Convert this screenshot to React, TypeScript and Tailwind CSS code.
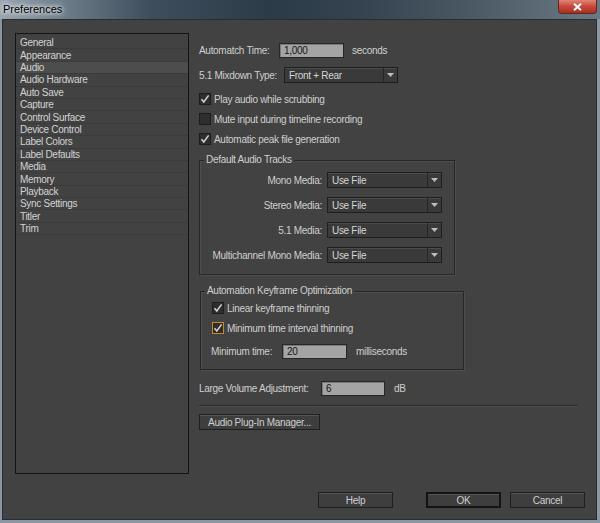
import React from 'react';

const items = [
  'General', 'Appearance', 'Audio', 'Audio Hardware', 'Auto Save', 'Capture', 'Control Surface',
  'Device Control', 'Label Colors', 'Label Defaults', 'Media', 'Memory', 'Playback',
  'Sync Settings', 'Titler', 'Trim',
];

function Check({ checked, focus }: { checked?: boolean; focus?: boolean }) {
  return (
    <span
      className={`flex h-[12px] w-[12px] shrink-0 items-center justify-center border bg-[#2e2e2e] ${
        focus ? 'border-[#c38a2b]' : 'border-[#1d1d1d]'
      }`}
    >
      {checked && (
        <svg viewBox="0 0 10 10" className="h-[10px] w-[10px]">
          <path d="M1.5 5.2 L3.8 8 L8.6 1.4" fill="none" stroke="#d4d4d4" strokeWidth="1.5" />
        </svg>
      )}
    </span>
  );
}

function CheckRow({ label, checked, focus }: { label: string; checked?: boolean; focus?: boolean }) {
  return (
    <div className="flex h-[14px] items-center gap-[3px]">
      <Check checked={checked} focus={focus} />
      <span>{label}</span>
    </div>
  );
}

function Field({ value, className }: { value: string; className: string }) {
  return (
    <div
      className={`flex h-[15px] items-center border border-[#262626] bg-[#a4a4a4] pl-[4px] text-[#151515] shadow-[inset_1px_1px_0_#7a7a7a] ${className}`}
    >
      {value}
    </div>
  );
}

function Select({ value, className }: { value: string; className: string }) {
  return (
    <div
      className={`flex h-[16px] items-stretch border border-[#1e1e1e] bg-[#3a3a3a] shadow-[inset_0_1px_0_#4c4c4c] ${className}`}
    >
      <span className="flex flex-1 items-center pl-[4px] text-[#d4d4d4]">{value}</span>
      <span className="flex w-[14px] items-center justify-center border-l border-[#262626]">
        <svg viewBox="0 0 7 4" className="h-[4px] w-[7px]">
          <path d="M0 0 H7 L3.5 4 Z" fill="#bdbdbd" />
        </svg>
      </span>
    </div>
  );
}

function Button({ label, className }: { label: string; className: string }) {
  return (
    <div
      className={`flex h-[16px] items-center justify-center bg-[#3e3e3e] shadow-[inset_0_1px_0_#555] ${className}`}
    >
      {label}
    </div>
  );
}

function Group({ title, className, children }: { title: string; className: string; children: React.ReactNode }) {
  return (
    <div className={`relative border border-[#262626] shadow-[inset_1px_1px_0_#4e4e4e,1px_1px_0_#4e4e4e] ${className}`}>
      <span className="absolute left-[4px] top-[-7px] bg-[#424242] px-[2px] leading-[12px]">{title}</span>
      {children}
    </div>
  );
}

export default function App() {
  return (
    <div className="flex h-[523px] w-[600px] flex-col bg-[#8897a3] font-['Liberation_Sans',Arial,sans-serif] text-[10px] tracking-[-0.3px] text-[#cfcfcf]">
      {/* title bar */}
      <div className="relative flex h-[19px] shrink-0 items-start bg-[linear-gradient(90deg,#9aa7b2_0%,#6f7f8c_10%,#3e4e5c_25%,#2c3b48_45%,#34434f_60%,#4a5864_78%,#6b7984_100%)]">
        <span className="ml-[3px] mt-[2px] text-[11px] leading-[14px] tracking-normal text-black [text-shadow:0_0_4px_#fff,0_0_6px_#fff]">
          Preferences
        </span>
        <div className="absolute right-[3px] top-0 flex h-[14px] w-[39px] items-center justify-center rounded-b-[4px] border border-t-0 border-[#5a2a24] bg-[linear-gradient(180deg,#e18676_0%,#c9473a_50%,#a8301f_100%)]">
          <svg viewBox="0 0 9 8" className="h-[8px] w-[9px]">
            <path d="M1 0.8 L8 7.2 M8 0.8 L1 7.2" stroke="#fff" strokeWidth="2" />
          </svg>
        </div>
      </div>

      {/* body */}
      <div className="mb-[3px] ml-[2px] mr-[3px] flex flex-1 flex-col border border-[#2c2c2c] bg-[#424242]">
        <div className="mt-[13px] flex items-start">
          {/* category list */}
          <div className="ml-[12px] flex h-[441px] w-[174px] shrink-0 flex-col border border-[#141414] pt-[3px]">
            {items.map((it) => (
              <div
                key={it}
                className={`flex h-[12.4px] items-center border-b border-[#3b3b3b] pl-[4px] text-[#d2d2d2] ${
                  it === 'Audio' ? 'bg-[#4d4d4d]' : ''
                }`}
              >
                {it}
              </div>
            ))}
          </div>

          {/* settings */}
          <div className="ml-[10px] mt-[10px] flex flex-col">
            <div className="flex h-[15px] items-center">
              <span className="w-[80px]">Automatch Time:</span>
              <Field value="1,000" className="w-[65px]" />
              <span className="ml-[8px]">seconds</span>
            </div>
            <div className="mt-[9px] flex h-[16px] items-center">
              <span className="w-[85px]">5.1 Mixdown Type:</span>
              <Select value="Front + Rear" className="w-[114px]" />
            </div>
            <div className="mt-[9px] flex flex-col gap-[6px]">
              <CheckRow label="Play audio while scrubbing" checked />
              <CheckRow label="Mute input during timeline recording" />
              <CheckRow label="Automatic peak file generation" checked />
            </div>

            <Group title="Default Audio Tracks" className="mt-[14px] h-[115px] w-[256px]">
              <div className="mt-[11px] flex flex-col gap-[9px]">
                {['Mono Media:', 'Stereo Media:', '5.1 Media:', 'Multichannel Mono Media:'].map((l) => (
                  <div key={l} className="flex h-[16px] items-center">
                    <span className="w-[122px] text-right">{l}</span>
                    <Select value="Use File" className="ml-[5px] w-[115px]" />
                  </div>
                ))}
              </div>
            </Group>

            <Group title="Automation Keyframe Optimization" className="ml-[1px] mt-[16px] h-[79px] w-[264px]">
              <div className="ml-[11px] mt-[9px] flex flex-col gap-[6px]">
                <CheckRow label="Linear keyframe thinning" checked />
                <CheckRow label="Minimum time interval thinning" checked focus />
              </div>
              <div className="ml-[10px] mt-[9px] flex h-[15px] items-center">
                <span className="w-[71px]">Minimum time:</span>
                <Field value="20" className="w-[65px]" />
                <span className="ml-[9px]">milliseconds</span>
              </div>
            </Group>

            <div className="mt-[11px] flex h-[15px] items-center">
              <span className="w-[122px]">Large Volume Adjustment:</span>
              <Field value="6" className="w-[64px]" />
              <span className="ml-[9px]">dB</span>
            </div>

            <div className="mt-[9px] h-[1px] w-[379px] bg-[#2a2a2a] shadow-[0_1px_0_#4e4e4e]" />

            <Button label="Audio Plug-In Manager..." className="mt-[8px] w-[121px] border border-[#1f1f1f]" />
          </div>
        </div>

        {/* bottom buttons */}
        <div className="mr-[11px] mt-[18px] flex justify-end">
          <Button label="Help" className="w-[75px] border border-[#1f1f1f]" />
          <Button label="OK" className="ml-[33px] w-[75px] border-2 border-[#141414]" />
          <Button label="Cancel" className="ml-[9px] w-[75px] border border-[#1f1f1f]" />
        </div>
      </div>
    </div>
  );
}
